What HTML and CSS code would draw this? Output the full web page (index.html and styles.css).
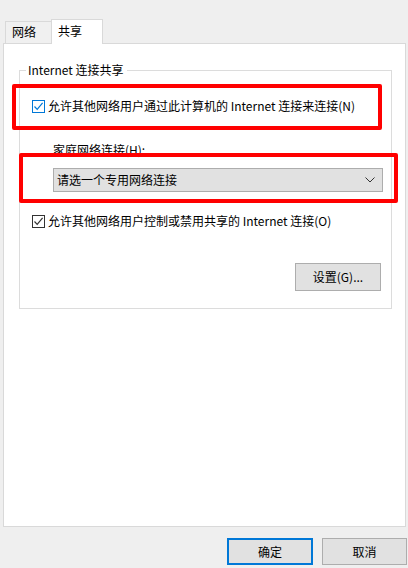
FILE: index.html
```html
<!DOCTYPE html>
<html lang="zh-CN">
<head>
<meta charset="utf-8">
<title>共享</title>
<link rel="stylesheet" href="styles.css">
</head>
<body>
<div class="tabs">
  <div class="tab">网络</div>
  <div class="tab tab-active">共享</div>
</div>
<div class="panel">
  <fieldset class="group">
    <legend>Internet 连接共享</legend>
    <label class="check check-first">
      <span class="box box-focus"><svg width="11" height="11" viewBox="0 0 11 11"><polyline points="1.5,5.5 4.2,8.4 9.6,1.8" fill="none" stroke="#0078d7" stroke-width="1.2"/></svg></span>
      <span>允许其他网络用户通过此计算机的 Internet 连接来连接(N)</span>
    </label>
    <div class="field-label">家庭网络连接(H):</div>
    <div class="select">
      <span>请选一个专用网络连接</span>
      <svg width="10" height="6" viewBox="0 0 10 6"><polyline points="0.5,0.5 5,5 9.5,0.5" fill="none" stroke="#333" stroke-width="1"/></svg>
    </div>
    <label class="check check-second">
      <span class="box"><svg width="11" height="11" viewBox="0 0 11 11"><polyline points="1.5,5.5 4.2,8.4 9.6,1.8" fill="none" stroke="#333" stroke-width="1.2"/></svg></span>
      <span>允许其他网络用户控制或禁用共享的 Internet 连接(O)</span>
    </label>
    <div class="btn-row">
      <button class="btn btn-settings">设置(G)...</button>
    </div>
  </fieldset>
  <div class="mark mark-one"></div>
  <div class="mark mark-two"></div>
</div>
<div class="footer">
  <button class="btn btn-ok">确定</button>
  <button class="btn btn-cancel">取消</button>
</div>
</body>
</html>
```
FILE: styles.css
```css
* { box-sizing: border-box; }
html, body {
  margin: 0;
  padding: 0;
  width: 408px;
  height: 568px;
  overflow: hidden;
  background: #efefef;
  font-family: "Noto Sans CJK SC", "Noto Sans", sans-serif;
  font-size: 12px;
  color: #000;
}
.tabs {
  display: flex;
  align-items: flex-end;
  height: 43px;
  padding-left: 5px;
}
.tab {
  height: 22px;
  width: 46px;
  border: 1px solid #d9d9d9;
  border-right: none;
  border-bottom: none;
  background: #f0f0f0;
  padding-left: 6px;
  line-height: 20px;
}
.tab-active {
  position: relative;
  z-index: 1;
  width: 52px;
  height: 25px;
  margin-bottom: -1px;
  background: #fff;
  border-right: 1px solid #d9d9d9;
  padding-left: 6px;
  line-height: 22px;
}
.panel {
  position: relative;
  margin: 0 2px 0 3px;
  height: 484px;
  background: #fff;
  border: 1px solid #d9d9d9;
  padding-top: 18px;
}
.group {
  margin: 0 13px 0 15px;
  padding: 0 0 17px 12px;
  border: 1px solid #dcdcdc;
  min-width: 0;
}
.group legend {
  margin-left: -6px;
  padding: 0 3px 0 2px;
  line-height: 16px;
  height: 16px;
}
.check {
  display: flex;
  align-items: center;
  gap: 3px;
  height: 16px;
  line-height: 16px;
  white-space: nowrap;
}
.check-first { margin-top: 20px; }
.check-second { margin-top: 21px; }
.box {
  width: 13px;
  height: 13px;
  border: 1px solid #333;
  background: #fff;
  display: flex;
  align-items: center;
  justify-content: center;
  flex: none;
}
.box-focus { border-color: #0078d7; }
.field-label {
  margin-top: 28px;
  margin-left: 21px;
  line-height: 16px;
  height: 16px;
}
.select {
  margin-top: 10px;
  margin-left: 21px;
  margin-right: 8px;
  height: 24px;
  background: #e1e1e1;
  border: 1px solid #adadad;
  display: flex;
  align-items: center;
  justify-content: space-between;
  padding: 0 7px 0 3px;
  line-height: 16px;
}
.btn-row {
  display: flex;
  justify-content: flex-end;
  margin-top: 34px;
  padding-right: 10px;
}
.btn {
  font-family: inherit;
  font-size: 12px;
  color: #000;
  background: #e1e1e1;
  border: 1px solid #adadad;
  padding: 0;
  margin: 0;
  line-height: 16px;
}
.btn-settings {
  width: 86px;
  height: 28px;
}
.mark {
  position: absolute;
  border: 4px solid #f00;
  border-radius: 2px;
}
.mark-one {
  left: 8px;
  top: 40px;
  width: 370px;
  height: 46px;
}
.mark-two {
  left: 15px;
  top: 109px;
  width: 379px;
  height: 50px;
}
.footer {
  display: flex;
  justify-content: flex-end;
  gap: 9px;
  margin-top: 11px;
  padding-right: 1px;
}
.btn-ok {
  width: 86px;
  height: 27px;
  border: 2px solid #0078d7;
}
.btn-cancel {
  width: 85px;
  height: 27px;
}
```
